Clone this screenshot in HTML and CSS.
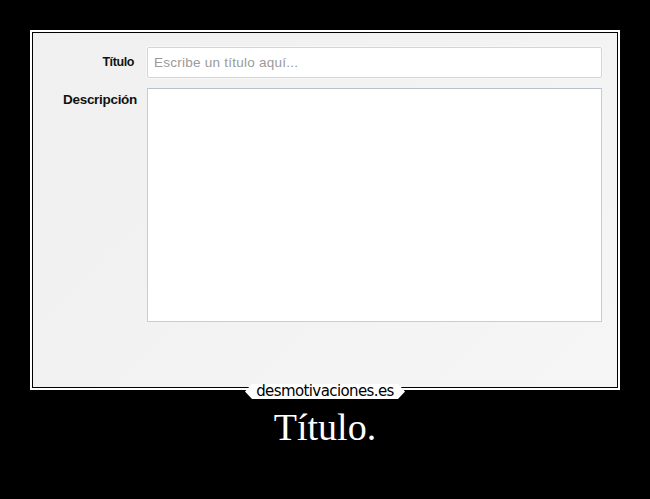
FILE: index.html
```html
<!DOCTYPE html>
<html>
<head>
<meta charset="utf-8">
<link rel="stylesheet" href="styles.css">
</head>
<body>
<div class="poster">
  <div class="frame">
    <div class="shot">
      <div class="form">
        <div class="row">
          <label class="label label-title">Título</label>
          <div class="input">Escribe un título aquí...</div>
        </div>
        <div class="row">
          <label class="label label-desc">Descripción</label>
          <div class="textarea"></div>
        </div>
      </div>
    </div>
    <div class="logo"><span>desmotivaciones.es</span></div>
  </div>
  <div class="caption">Título.</div>
</div>
</body>
</html>
```

FILE: styles.css
```css
html, body {
  margin: 0;
  padding: 0;
  background: #000;
}
.poster {
  width: 650px;
  height: 499px;
  background: #000;
  display: flex;
  flex-direction: column;
  align-items: center;
}
.frame {
  position: relative;
  margin-top: 30px;
  width: 584px;
  height: 354px;
  border: 2px solid #fff;
  padding: 1px;
  background: #000;
}
.shot {
  width: 584px;
  height: 354px;
  background: linear-gradient(135deg, #f0f0f0 0%, #f3f3f3 60%, #f6f6f6 100%);
  box-sizing: border-box;
  padding-top: 14px;
}
.form {
  display: flex;
  flex-direction: column;
  gap: 10px;
}
.row {
  display: flex;
  align-items: flex-start;
}
.label {
  text-align: right;
  font-family: "Liberation Sans", Arial, sans-serif;
  font-weight: bold;
  color: #111;
  white-space: nowrap;
}
.label-title {
  width: 101px;
  margin-right: 13px;
  font-size: 12.5px;
  letter-spacing: -0.4px;
  line-height: 31px;
}
.label-desc {
  width: 104px;
  margin-right: 10px;
  font-size: 13.5px;
  letter-spacing: -0.3px;
  line-height: 14px;
  padding-top: 5px;
}
.input {
  box-sizing: border-box;
  width: 455px;
  height: 31px;
  background: #fff;
  border: 1px solid #d4d4d4;
  border-radius: 2px;
  box-shadow: 0 0 0 1px #f8f8f8;
  font-family: "Liberation Sans", Arial, sans-serif;
  font-size: 13.5px;
  letter-spacing: 0.25px;
  color: #9a9a9a;
  line-height: 29px;
  padding-left: 6px;
}
.textarea {
  box-sizing: border-box;
  width: 455px;
  height: 234px;
  background: #fff;
  border: 1px solid #c5cdd8;
  border-top-color: #b9c1cc;
}
.logo {
  position: absolute;
  left: 50%;
  bottom: -11px;
  transform: translateX(-50%);
  width: 160px;
  height: 15px;
  background: #fff;
  clip-path: polygon(7px 0, 153px 0, 160px 50%, 153px 100%, 7px 100%, 0 50%);
  display: flex;
  align-items: center;
  justify-content: center;
}
.logo span {
  font-family: "DejaVu Sans", sans-serif;
  font-size: 15px;
  letter-spacing: -0.6px;
  color: #000;
  line-height: 15px;
}
.caption {
  margin-top: 15px;
  font-family: "Liberation Serif", "Times New Roman", serif;
  font-size: 38px;
  color: #fff;
  line-height: 44px;
}
```
